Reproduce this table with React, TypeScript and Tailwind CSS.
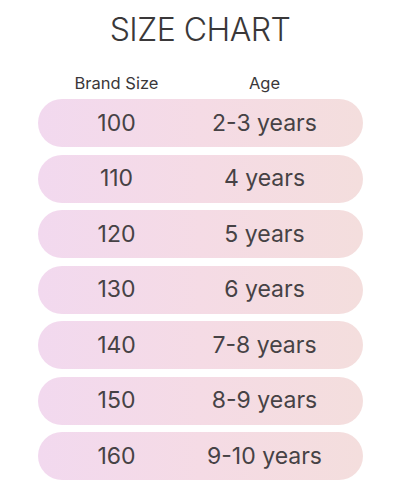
import React from "react";

const rows = [
  ["100", "2-3 years"],
  ["110", "4 years"],
  ["120", "5 years"],
  ["130", "6 years"],
  ["140", "7-8 years"],
  ["150", "8-9 years"],
  ["160", "9-10 years"],
];

export default function App() {
  return (
    <div
      className="w-[400px] h-[500px] bg-white flex flex-col items-center text-[#464245]"
      style={{ fontFamily: "Inter, 'Noto Sans', sans-serif" }}
    >
      <h1 className="mt-[11px] h-[38px] leading-[38px] text-[32px] font-light tracking-[-0.5px] text-[#3a3839]">
        SIZE CHART
      </h1>
      <div className="mt-[24px] w-[325px] flex text-[16.5px] leading-[20px] text-[#3a3739]">
        <div className="w-[158px] text-center">Brand Size</div>
        <div className="w-[138px] text-center">Age</div>
      </div>
      <div className="mt-[6px] w-[325px] flex flex-col gap-[7.5px]">
        {rows.map(([s, a]) => (
          <div
            key={s}
            className="h-12 rounded-full bg-gradient-to-r from-[#f2d9ef] via-[#f5dbe5] to-[#f4dedd] flex items-center text-[23px]"
          >
            <div className="w-[158px] text-center">{s}</div>
            <div className="w-[138px] text-center">{a}</div>
          </div>
        ))}
      </div>
    </div>
  );
}
